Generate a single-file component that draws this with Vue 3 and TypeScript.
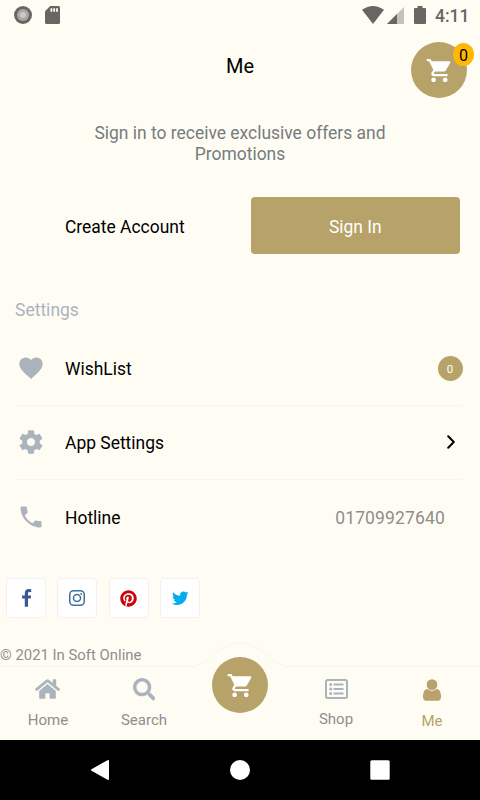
<script setup lang="ts">
interface Social { name: string; color: string; box: string; path: string; size: number }
interface Tab { label: string; box: string; path: string; w: number; h: number; kind: string }

const cart = 'M169.6 377.6c-22.9 0-41.6 18.7-41.6 41.6s18.7 41.6 41.6 41.6 41.6-18.7 41.6-41.6-18.7-41.6-41.6-41.6zM48 51.2v41.6h41.6l74.9 151.7-31.3 51c-3.1 5.2-5.2 12.5-5.2 19.7 0 27.9 19 41.6 44.8 41.6H416v-40H177.9c-3.1 0-5.2-2.1-5.2-5.2 0-1 2.2-5.2 2.2-5.2l20.8-32.8h155c15.600 0 29.100-8.300 36.400-21.800l74.900-128.800c1.200-2.500 2.100-6.200 2.100-10.400 0-11.400-9.400-19.800-20.800-19.800H135.400L115.600 51.200H48zm326.400 326.400c-22.900 0-41.600 18.700-41.600 41.600s18.700 41.600 41.600 41.600 41.600-18.700 41.600-41.600-18.700-41.600-41.600-41.600z'

const socials: Social[] = [
  { name: 'facebook', color: '#3b5998', box: '0 0 1792 1792', size: 19, path: 'M1343 12v264h-157q-86 0-116 36t-30 108v189h293l-39 296h-254v759h-306v-759h-255v-296h255v-218q0-186 104-288.5t277-102.5q147 0 228 12z' },
  { name: 'instagram', color: '#3f729b', box: '0 0 16 16', size: 16, path: '' },
  { name: 'pinterest', color: '#c8060f', box: '0 0 496 512', size: 17, path: 'M496 256c0 137-111 248-248 248-25.600 0-50.200-3.900-73.400-11.100 10.100-16.500 25.200-43.500 30.800-65 3-11.600 15.400-59 15.400-59 8.100 15.400 31.700 28.500 56.800 28.500 74.800 0 128.700-68.800 128.700-154.300 0-81.900-66.900-143.200-152.900-143.200-107 0-163.900 71.800-163.900 150.100 0 36.400 19.400 81.700 50.300 96.100 4.700 2.200 7.200 1.200 8.300-3.300.8-3.400 5-20.300 6.900-28.100.6-2.500.3-4.700-1.700-7.100-10.100-12.500-18.300-35.300-18.300-56.600 0-54.700 41.400-107.600 112-107.600 60.900 0 103.600 41.500 103.600 100.900 0 67.100-33.900 113.600-78 113.600-24.300 0-42.600-20.100-36.700-44.800 7-29.500 20.500-61.300 20.500-82.600 0-19-10.200-34.900-31.400-34.900-24.900 0-44.900 25.700-44.900 60.200 0 22 7.400 36.800 7.400 36.800s-24.500 103.800-29 123.200c-5 21.400-3 51.600-.9 71.200C65.400 450.900 0 361.100 0 256 0 119 111 8 248 8s248 111 248 248z' },
  { name: 'twitter', color: '#00aced', box: '0 0 512 512', size: 16.500, path: 'M459.370 151.716c.325 4.548.325 9.097.325 13.645 0 138.720-105.583 298.558-298.558 298.558-59.452 0-114.680-17.219-161.137-47.106 8.447.974 16.568 1.299 25.340 1.299 49.055 0 94.213-16.568 130.274-44.832-46.132-.975-84.792-31.188-98.112-72.772 6.498.974 12.995 1.624 19.818 1.624 9.421 0 18.843-1.300 27.614-3.573-48.081-9.747-84.143-51.980-84.143-102.985v-1.299c13.969 7.797 30.214 12.670 47.431 13.319-28.264-18.843-46.781-51.005-46.781-87.391 0-19.492 5.197-37.360 14.294-52.954 51.655 63.675 129.300 105.258 216.365 109.807-1.624-7.797-2.599-15.918-2.599-24.040 0-57.828 46.782-104.934 104.934-104.934 30.213 0 57.502 12.670 76.670 33.137 23.715-4.548 46.456-13.320 66.599-25.340-7.798 24.366-24.366 44.833-46.132 57.827 21.117-2.273 41.584-8.122 60.426-16.243-14.292 20.791-32.161 39.308-52.628 54.253z' },
]

const tabs: Tab[] = [
  { label: 'Home', kind: 'home', box: '0 32 576 448', w: 25, h: 20, path: 'M280.370 148.260L96 300.110V464a16 16 0 0 0 16 16l112.060-.29a16 16 0 0 0 15.920-16V368a16 16 0 0 1 16-16h64a16 16 0 0 1 16 16v95.640a16 16 0 0 0 16 16.050L464 480a16 16 0 0 0 16-16V300L295.670 148.260a12.190 12.190 0 0 0-15.300 0zM571.600 251.470L488 182.560V44.050a12 12 0 0 0-12-12h-56a12 12 0 0 0-12 12v72.610L318.470 43a48 48 0 0 0-61 0L4.340 251.470a12 12 0 0 0-1.600 16.900l25.500 31A12 12 0 0 0 45.150 301l235.220-193.740a12.190 12.190 0 0 1 15.300 0L530.900 301a12 12 0 0 0 16.900-1.600l25.500-31a12 12 0 0 0-1.700-16.930z' },
  { label: 'Search', kind: 'search', box: '0 0 512 512', w: 22.5, h: 22.5, path: 'M505 442.700L405.300 343c-4.500-4.500-10.600-7-17-7H372c27.600-35.300 44-79.700 44-128C416 93.100 322.900 0 208 0S0 93.100 0 208s93.100 208 208 208c48.300 0 92.700-16.400 128-44v16.300c0 6.400 2.500 12.500 7 17l99.700 99.700c9.400 9.400 24.600 9.400 33.900 0l28.300-28.300c9.400-9.400 9.400-24.600.1-34zM208 336c-70.700 0-128-57.200-128-128 0-70.700 57.200-128 128-128 70.700 0 128 57.200 128 128 0 70.700-57.200 128-128 128z' },
  { label: '', kind: 'cart', box: '', w: 0, h: 0, path: '' },
  { label: 'Shop', kind: 'shop', box: '0 0 23 20', w: 23, h: 20, path: 'M2.500 0h18A2.500 2.500 0 0 1 23 2.500v15a2.500 2.500 0 0 1-2.500 2.500h-18A2.500 2.500 0 0 1 0 17.500v-15A2.500 2.500 0 0 1 2.500 0zM2 2.800v14.400q0 .8.800.8h17.400q.8 0 .8-.8V2.800q0-.8-.8-.8H2.800q-.8 0-.8.800zM8.500 4.500h10v2.100h-10zM8.500 9h10v2.100h-10zM8.500 13.500h10v2.100h-10zM4.200 5.600a1.500 1.500 0 1 0 3 0a1.500 1.500 0 1 0-3 0zM4.200 10a1.500 1.500 0 1 0 3 0a1.500 1.500 0 1 0-3 0zM4.200 14.500a1.500 1.500 0 1 0 3 0a1.500 1.500 0 1 0-3 0z' },
  { label: 'Me', kind: 'me', box: '256 128 1280 1536', w: 18, h: 22, path: 'M1536 1399q0 109-62.500 187t-150.500 78h-854q-88 0-150.500-78t-62.500-187q0-85 8.500-160.500t31.500-152 58.500-131 94-89 134.500-34.500q131 128 313 128t313-128q76 0 134.500 34.500t94 89 58.500 131 31.500 152 8.500 160.500zm-256-887q0 159-112.500 271.500t-271.500 112.500-271.500-112.500-112.500-271.500 112.500-271.500 271.500-112.500 271.500 112.500 112.500 271.500z' },
]
</script>

<template>
  <div class="phone">
    <div class="status">
      <svg class="sync" viewBox="0 0 18 18"><circle cx="9" cy="9" r="9" fill="#666663" /><circle cx="9" cy="9" r="6" fill="#a9a8a3" /><circle cx="9" cy="9" r="3" fill="#c9c8c2" /></svg>
      <svg class="sd" viewBox="0 0 15 18"><path fill="#666663" d="M5.200 0H13.500Q15 0 15 1.500V16.500Q15 18 13.500 18H1.500Q0 18 0 16.500V5.200z" /><path d="M5.500 2.300h1.800v3.500H5.500zM8.300 2.300h1.800v3.500H8.300zM11.100 2.300h1.800v3.500h-1.800z" fill="#fffdf3" /></svg>
      <span class="spacer"></span>
      <svg class="wifi" viewBox="0 0 22 18"><path fill="#666663" d="M0 3.800Q11-3.800 22 3.800L11 18z" /></svg>
      <svg class="signal" viewBox="0 0 17 17"><path d="M17 0V17H0z" fill="#c3c2bb" /><path d="M10 7V17H0z" fill="#666663" /></svg>
      <svg class="battery" viewBox="0 0 12 18"><path fill="#666663" d="M3.500 0h5v2H11q1 0 1 1v14q0 1-1 1H1q-1 0-1-1V3q0-1 1-1h2.500z" /></svg>
      <span class="clock">4:11</span>
    </div>

    <header class="header">
      <h1>Me</h1>
      <div class="cart-button">
        <svg viewBox="0 0 512 512"><path :d="cart" fill="#fff" /></svg>
        <span class="cart-count">0</span>
      </div>
    </header>

    <p class="promo">Sign in to receive exclusive offers and Promotions</p>
    <div class="auth">
      <button class="create">Create Account</button>
      <button class="signin">Sign In</button>
    </div>

    <h2>Settings</h2>
    <section class="list">
      <div class="row">
        <svg class="row-icon" viewBox="0 0 24 24"><path d="M12 21.350l-1.450-1.320C5.400 15.360 2 12.280 2 8.500 2 5.420 4.420 3 7.500 3c1.740 0 3.410.81 4.500 2.090C13.090 3.810 14.760 3 16.500 3 19.580 3 22 5.420 22 8.500c0 3.780-3.400 6.860-8.550 11.540L12 21.350z" /></svg>
        <span class="row-label">WishList</span>
        <span class="count">0</span>
      </div>
      <div class="row">
        <svg class="row-icon" viewBox="0 0 24 24"><path d="M19.430 12.980c.04-.32.07-.64.07-.98s-.03-.66-.07-.98l2.110-1.650c.19-.15.24-.42.12-.64l-2-3.460c-.12-.22-.39-.3-.61-.22l-2.490 1c-.52-.4-1.080-.73-1.690-.98l-.38-2.650C14.460 2.180 14.250 2 14 2h-4c-.25 0-.46.18-.49.42l-.38 2.650c-.61.25-1.170.59-1.690.98l-2.490-1c-.23-.09-.49 0-.61.22l-2 3.460c-.13.22-.07.49.12.64l2.110 1.650c-.04.32-.07.65-.07.98s.03.66.07.98l-2.110 1.650c-.19.15-.24.42-.12.64l2 3.460c.12.22.39.3.61.22l2.490-1c.52.4 1.080.73 1.690.98l.38 2.650c.03.24.24.42.49.42h4c.25 0 .46-.18.49-.42l.38-2.650c.61-.25 1.170-.59 1.690-.98l2.490 1c.23.09.49 0 .61-.22l2-3.460c.12-.22.07-.49-.12-.64l-2.110-1.650zM12 15.500c-1.930 0-3.500-1.570-3.500-3.500s1.570-3.500 3.500-3.500 3.500 1.570 3.500 3.500-1.570 3.500-3.500 3.500z" /></svg>
        <span class="row-label">App Settings</span>
        <svg class="chevron" viewBox="0 0 8 14"><path d="M1.200 1.200L6.800 7L1.200 12.800" /></svg>
      </div>
      <div class="row">
        <svg class="row-icon" viewBox="0 0 512 512"><path d="M426.666 330.667a250.385 250.385 0 0 1-75.729-11.729c-7.469-2.136-16-1.073-21.332 5.333l-46.939 46.928c-60.802-30.928-109.864-80-140.802-140.803l46.939-46.927c5.332-5.333 7.462-13.864 5.332-21.333-8.537-24.531-12.802-50.136-12.802-76.803C181.333 73.604 171.734 64 160 64H85.333C73.599 64 64 73.604 64 85.333 64 274.656 237.344 448 426.666 448 438.400 448 448 438.400 448 426.667V352c0-11.729-9.600-21.333-21.334-21.333z" /></svg>
        <span class="row-label">Hotline</span>
        <span class="phone-no">01709927640</span>
      </div>
    </section>

    <div class="socials">
      <a v-for="s in socials" :key="s.name" class="social">
        <svg v-if="s.name === 'instagram'" width="16" height="16" viewBox="0 0 16 16" fill="none" stroke="#3f729b" stroke-width="1.500"><rect x=".75" y=".75" width="14.500" height="14.500" rx="3.800" /><circle cx="8" cy="8" r="3.500" /><circle cx="12.200" cy="3.900" r=".9" fill="#3f729b" stroke="none" /></svg>
        <svg v-else :width="s.size" :height="s.size" :viewBox="s.box"><path :d="s.path" :fill="s.color" /></svg>
      </a>
    </div>
    <p class="copyright">© 2021 In Soft Online</p>

    <nav class="tabs">
      <svg class="curve" viewBox="0 0 480 26"><path d="M0 24.500H192C206 24.500 219 .5 240 .5S274 24.500 288 24.500H480V26H0z" fill="#fffdf3" /><path d="M0 24.500H192C206 24.500 219 .5 240 .5S274 24.500 288 24.500H480" fill="none" stroke="#f4f4f4" /></svg>
      <div v-for="t in tabs" :key="t.kind" class="tab" :class="t.kind">
        <div v-if="t.kind === 'cart'" class="cart-button"><svg viewBox="0 0 512 512"><path :d="cart" fill="#fff" /></svg></div>
        <template v-else>
          <svg :width="t.w" :height="t.h" :viewBox="t.box"><path :d="t.path" fill-rule="evenodd" fill="currentColor" /></svg>
          <span>{{ t.label }}</span>
        </template>
      </div>
    </nav>
    <div class="system">
      <svg viewBox="0 0 20 20"><path d="M18 1V19L2 10z" stroke="#fff" stroke-width="2" stroke-linejoin="round" /></svg>
      <svg viewBox="0 0 20 20"><circle cx="10" cy="10" r="10" /></svg>
      <svg viewBox="0 0 20 20"><rect x=".3" y=".3" width="19.400" height="19.400" rx="1.500" /></svg>
    </div>
  </div>
</template>

<style>
body { background: #fffdf3; }
</style>

<style scoped>
* { box-sizing: border-box; margin: 0; }
svg { display: block; flex: none; }
.phone { width: 480px; height: 800px; overflow: hidden; display: flex; flex-direction: column; background: #fffdf3; font-family: Roboto, sans-serif; font-size: 17.45px; color: #000; }
.status { height: 30px; flex: none; display: flex; align-items: center; padding: 0 12px 0 13.5px; }
.sync { width: 18px; height: 18px; }
.sd { width: 15px; height: 18px; margin-left: 13.5px; }
.spacer { flex: 1; }
.wifi { width: 22px; height: 18px; }
.signal { width: 17px; height: 17px; margin-left: 3px; }
.battery { width: 12px; height: 18px; margin-left: 10px; }
.clock { width: 33px; margin-left: 9px; font-size: 17.5px; font-weight: 500; color: #666663; line-height: 22px; padding-top: 2px; }
.header { height: 72px; flex: none; display: grid; grid-template-columns: 56px 1fr 56px; align-items: start; padding: 12px 13px 0; }
h1 { grid-column: 2; text-align: center; font-size: 20px; font-weight: 400; line-height: 24px; padding-top: 12px; }
.cart-button { position: relative; width: 56px; height: 56px; border-radius: 50%; background: #b7a26a; display: flex; align-items: center; justify-content: center; padding-right: 2px; }
.cart-button svg { width: 29px; height: 29px; }
.cart-count { position: absolute; right: -7px; top: 1px; width: 21px; height: 23px; border-radius: 50%; background: #ffb905; font-size: 16px; line-height: 25px; text-align: center; }
.promo { width: 320px; flex: none; margin: 21px auto 0; text-align: center; line-height: 21px; color: #757b80; }
.auth { flex: none; height: 57px; margin: 32px 20px 0; display: grid; grid-template-columns: 1fr 209.5px; }
button { border: 0; background: none; font: inherit; padding: 3px 0 0; }
.create { text-align: left; padding-left: 45px; }
.signin { background: #b7a26a; color: #fff; border-radius: 4px; }
h2 { flex: none; margin: 45px 15px 0; height: 22px; line-height: 22px; font-size: 17.5px; font-weight: 400; color: #abb4bd; }
.list { flex: none; margin: 10.5px 17px 0 15px; }
.row { height: 74px; display: flex; align-items: center; border-bottom: 1px solid #f5f5f5; padding-left: 2px; }
.row:last-child { border: 0; }
.row-icon { width: 28px; height: 28px; fill: #abb4bd; }
.row-label { flex: 1; margin-left: 20px; padding-top: 2px; }
.count { width: 25px; height: 25px; margin-right: .5px; border-radius: 50%; background: #b7a26a; color: #fff; font-size: 11.5px; line-height: 26px; text-align: center; }
.chevron { width: 8px; height: 14px; margin-right: 8px; fill: none; stroke: #000; stroke-width: 2; stroke-linecap: round; stroke-linejoin: round; }
.phone-no { margin-right: 18px; padding-top: 2px; font-size: 17.5px; letter-spacing: .15px; color: #8e8e8e; }
.socials { flex: none; display: flex; gap: 11.3px; margin: 24.5px 0 0 6px; }
.social { width: 40px; height: 40px; background: #fff; border: 1px solid #f1f1f3; border-radius: 4px; display: flex; align-items: center; justify-content: center; }
.copyright { flex: none; margin-top: 27px; line-height: 20px; font-size: 14.9px; color: #8e8e8e; }
.tabs { position: relative; flex: none; height: 74px; margin-top: auto; display: grid; grid-template-columns: repeat(5, 1fr); }
.curve { position: absolute; left: 0; top: -24px; width: 480px; height: 26px; }
.tab { position: relative; display: flex; flex-direction: column; align-items: center; color: #abb4bd; padding-top: 12px; }
.tab span { margin-top: auto; padding-bottom: 11px; font-size: 15px; line-height: 18px; color: #8e8e8e; }
.home { padding-top: 13px; }
.home svg { margin-right: 1px; }
.shop { padding-top: 13px; }
.shop span { padding-bottom: 12px; }
.me { color: #b7a26a; padding-top: 13px; }
.me span { color: #b7a26a; padding-bottom: 10px; }
.tab.cart { padding: 0; }
.tab .cart-button { margin-top: -9px; flex: none; }
.system { flex: none; height: 60px; background: #000; display: flex; align-items: center; justify-content: center; gap: 120px; }
.system svg { width: 20px; height: 20px; fill: #fff; }
</style>
